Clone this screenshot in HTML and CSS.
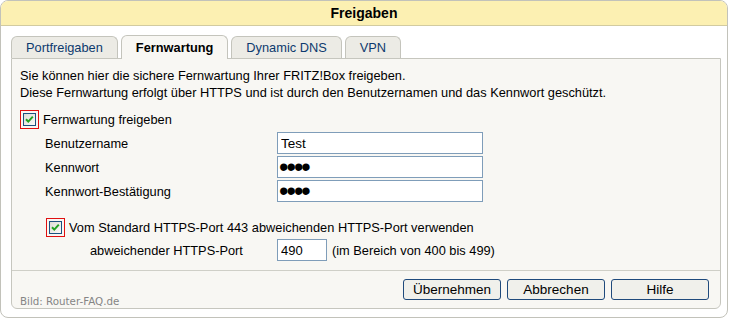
FILE: index.html
```html
<!DOCTYPE html>
<html lang="de">
<head>
<meta charset="utf-8">
<title>Freigaben</title>
<link rel="stylesheet" href="styles.css">
</head>
<body>
<div class="frame">
  <div class="header">Freigaben</div>
  <div class="tabs">
    <div class="tab">Portfreigaben</div>
    <div class="tab active">Fernwartung</div>
    <div class="tab">Dynamic DNS</div>
    <div class="tab">VPN</div>
  </div>
  <div class="panel">
    <div class="intro">
      <div>Sie können hier die sichere Fernwartung Ihrer FRITZ!Box freigeben.</div>
      <div>Diese Fernwartung erfolgt über HTTPS und ist durch den Benutzernamen und das Kennwort geschützt.</div>
    </div>
    <div class="check-row first">
      <span class="cb-frame"><span class="cb"><svg width="11" height="11" viewBox="0 0 11 11"><path d="M2 5.2 L4.3 7.6 L8.8 2.6" fill="none" stroke="#22a322" stroke-width="2"/></svg></span></span>
      <span class="cb-label">Fernwartung freigeben</span>
    </div>
    <div class="field-row">
      <span class="flabel">Benutzername</span>
      <input class="field" type="text" value="Test">
    </div>
    <div class="field-row">
      <span class="flabel">Kennwort</span>
      <input class="field pw" type="password" value="abcd">
    </div>
    <div class="field-row">
      <span class="flabel">Kennwort-Bestätigung</span>
      <input class="field pw" type="password" value="abcd">
    </div>
    <div class="check-row second">
      <span class="cb-frame"><span class="cb"><svg width="11" height="11" viewBox="0 0 11 11"><path d="M2 5.2 L4.3 7.6 L8.8 2.6" fill="none" stroke="#22a322" stroke-width="2"/></svg></span></span>
      <span class="cb-label">Vom Standard HTTPS-Port 443 abweichenden HTTPS-Port verwenden</span>
    </div>
    <div class="field-row port-row">
      <span class="flabel port-label">abweichender HTTPS-Port</span>
      <input class="field port" type="text" value="490">
      <span class="range">(im Bereich von 400 bis 499)</span>
    </div>
    <div class="footer">
      <span class="credit">Bild: Router-FAQ.de</span>
      <div class="buttons">
        <button class="btn">Übernehmen</button>
        <button class="btn">Abbrechen</button>
        <button class="btn">Hilfe</button>
      </div>
    </div>
  </div>
</div>
</body>
</html>
```
FILE: styles.css
```css
html, body {
  margin: 0;
  padding: 0;
  background: #fff;
}
body {
  font-family: "Liberation Sans", Arial, sans-serif;
  font-size: 12.8px;
  color: #000;
}
.frame {
  width: 726px;
  height: 316px;
  border: 1px solid #c2c2ba;
  border-radius: 8px;
  overflow: hidden;
  background: #fff;
}
.header {
  height: 24px;
  line-height: 25px;
  background: #fcf0b2;
  border-bottom: 1px solid #d2cba0;
  text-align: center;
  font-weight: bold;
  font-size: 14px;
}
.tabs {
  display: flex;
  align-items: flex-end;
  height: 32px;
  padding-left: 10px;
  gap: 3px;
  position: relative;
  z-index: 1;
}
.tab {
  box-sizing: border-box;
  height: 22px;
  line-height: 21px;
  padding: 0 14px;
  border: 1px solid #c4c4bc;
  border-bottom: 0;
  border-radius: 6px 6px 0 0;
  background: #ecebe5;
  color: #0d3a6e;
}
.tab.active {
  height: 24px;
  line-height: 24px;
  padding: 0 14px;
  margin-bottom: -1px;
  background: #f8f7f3;
  color: #000;
  font-weight: bold;
}
.panel {
  width: 708px;
  height: 249px;
  margin-left: 10px;
  border: 1px solid #c6c6be;
  border-radius: 0 0 6px 6px;
  background: #f8f7f3;
  display: flex;
  flex-direction: column;
}
.intro {
  padding: 8px 8px 0 8px;
  line-height: 17px;
}
.check-row {
  display: flex;
  align-items: center;
  height: 19px;
}
.check-row.first {
  margin-top: 9px;
  padding-left: 8px;
}
.check-row.second {
  margin-top: 16px;
  padding-left: 34px;
}
.cb-frame {
  box-sizing: border-box;
  width: 19px;
  height: 19px;
  border: 1px solid #e01010;
  display: flex;
  align-items: center;
  justify-content: center;
}
.cb {
  box-sizing: border-box;
  width: 13px;
  height: 13px;
  border: 1px solid #1c5180;
  background: linear-gradient(135deg, #dcdcd5, #fbfbf8);
  display: flex;
  align-items: center;
  justify-content: center;
}
.cb-label {
  margin-left: 4px;
}
.field-row {
  display: flex;
  align-items: center;
  height: 22px;
  margin-top: 2px;
  padding-left: 33px;
}
.check-row.first + .field-row {
  margin-top: 3px;
}
.flabel {
  width: 232px;
}
.field {
  box-sizing: border-box;
  width: 206px;
  height: 22px;
  margin: 0;
  padding: 0 3px;
  border: 1px solid #7f9db9;
  background: #fff;
  font-family: "Liberation Sans", Arial, sans-serif;
  font-size: 13.5px;
  color: #000;
  outline: none;
}
.field.pw {
  font-size: 27px;
  letter-spacing: -2px;
  padding-left: 1px;
}
.port-row {
  padding-left: 78px;
}
.port-label {
  width: 187px;
}
.field.port {
  width: 50px;
  font-size: 13px;
}
.range {
  margin-left: 5px;
}
.footer {
  margin-top: auto;
  height: 37px;
  border-top: 1px solid #cfcfc7;
  display: flex;
  justify-content: space-between;
  padding: 0 11px 0 8px;
}
.credit {
  align-self: flex-end;
  font-family: "DejaVu Sans", Verdana, sans-serif;
  font-size: 10.3px;
  line-height: 12px;
  color: #858585;
  padding-bottom: 1px;
}
.buttons {
  display: flex;
  gap: 6px;
  padding-top: 8px;
}
.btn {
  box-sizing: border-box;
  width: 98px;
  height: 21px;
  padding: 0;
  border: 1px solid #1f4a7c;
  border-radius: 3px;
  background: #f0f0eb;
  font-family: "Liberation Sans", Arial, sans-serif;
  font-size: 13.5px;
  color: #000;
}
```
